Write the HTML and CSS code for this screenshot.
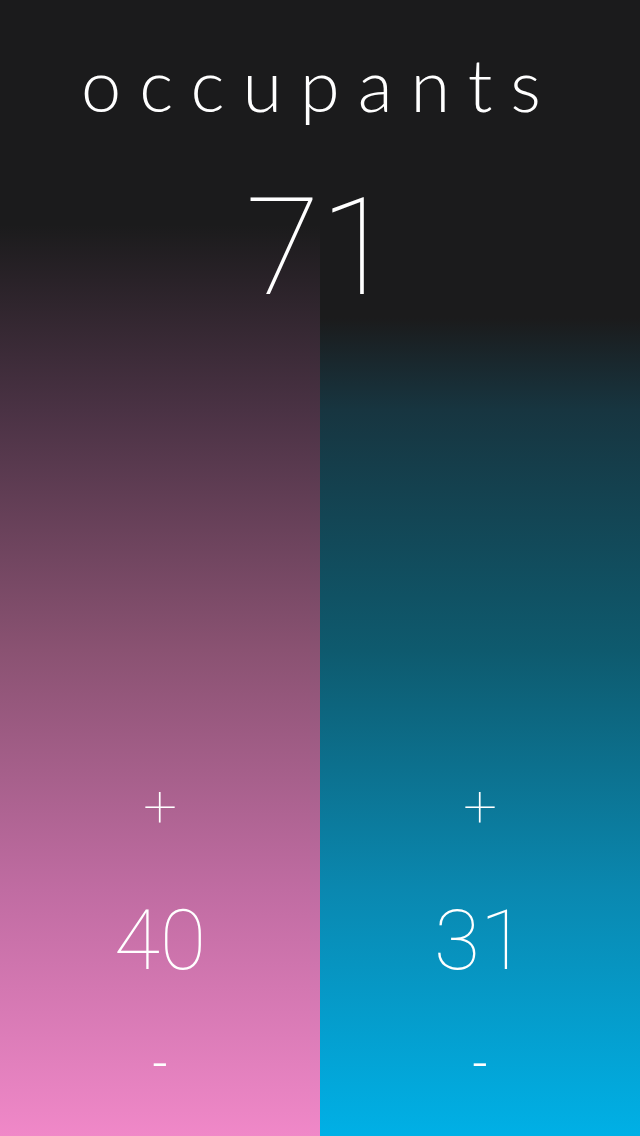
FILE: index.html
```html
<!DOCTYPE html>
<html lang="en">
<head>
<meta charset="utf-8">
<title>occupants</title>
<link rel="stylesheet" href="styles.css">
</head>
<body>
<main class="app">
  <h1 class="title">occupants</h1>
  <div class="total">71</div>
  <div class="counters">
    <section class="counter">
      <button class="op op-plus">+</button>
      <div class="count">40</div>
      <button class="op op-minus">-</button>
    </section>
    <section class="counter">
      <button class="op op-plus">+</button>
      <div class="count">31</div>
      <button class="op op-minus">-</button>
    </section>
  </div>
</main>
</body>
</html>
```
FILE: styles.css
```css
* { box-sizing: border-box; }
html, body { margin: 0; padding: 0; }
body {
  background: #1b1b1c;
  font-family: Roboto, "Liberation Sans", sans-serif;
  color: #ffffff;
}
.app {
  width: 640px;
  height: 1136px;
  display: flex;
  flex-direction: column;
  background-color: #1b1b1c;
  background-image:
    linear-gradient(to bottom, #1b1b1c 0px, #1b1b1c 225px, #4a3244 410px, #8a5272 650px, #c06ca2 890px, #f088c8 1136px),
    linear-gradient(to bottom, #1b1b1c 0px, #1b1b1c 318px, #173540 410px, #0e5a6e 650px, #0a88b0 890px, #00b0e6 1136px);
  background-size: 320px 1136px, 320px 1136px;
  background-position: 0 0, 320px 0;
  background-repeat: no-repeat;
  overflow: hidden;
}
.title {
  margin: 44px 0 0 0;
  font-family: Lato, "Open Sans", sans-serif;
  font-weight: 300;
  font-size: 72px;
  line-height: 80px;
  letter-spacing: 18px;
  padding-left: 0;
  text-align: center;
}
.total {
  margin-top: 54px;
  font-weight: 100;
  font-size: 136px;
  line-height: 140px;
  text-align: center;
}
.counters {
  margin-top: auto;
  display: flex;
}
.counter {
  flex: 1;
  display: flex;
  flex-direction: column;
  align-items: center;
  padding-bottom: 42px;
}
.op {
  background: none;
  border: 0;
  padding: 0;
  color: #ffffff;
  font-family: Roboto, sans-serif;
  font-weight: 100;
  height: 60px;
  line-height: 60px;
  width: 80px;
  cursor: pointer;
}
.op-plus { font-size: 60px; }
.op-minus { font-size: 52px; font-weight: 300; }
.count {
  margin: 54px 0 43px;
  height: 100px;
  line-height: 100px;
  font-weight: 100;
  font-size: 84px;
}
```
